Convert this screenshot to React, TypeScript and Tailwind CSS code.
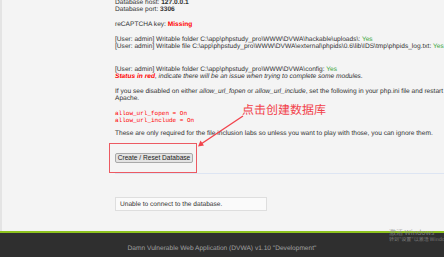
import React from 'react';

const Yes = () => <span className="text-[#3aa63a]">Yes</span>;

export default function App() {
  return (
    <div className="relative flex h-[257px] w-[444px] flex-col overflow-hidden bg-[#f4f4f4] font-['Liberation_Sans',Arial,sans-serif] text-[6.6px] text-[#333] [text-rendering:geometricPrecision]">
      <div className="flex flex-1 border-l-2 border-[#e4e4e4]">
        <div className="flex flex-1 flex-col pl-[113px] pr-[5px] leading-[7.4px]">
          {/* Database info */}
          <div className="mt-[-1px]">
            <p>Database host: <b>127.0.0.1</b></p>
            <p>Database port: <b>3306</b></p>
          </div>
          <p className="mt-[7.4px]">
            reCAPTCHA key: <b className="text-[#f00]">Missing</b>
          </p>
          <div className="mt-[7.4px] whitespace-nowrap">
            <p>[User: admin] Writable folder C:\app\phpstudy_pro\WWW\DVWA\hackable\uploads\: <Yes /></p>
            <p>[User: admin] Writable file C:\app\phpstudy_pro\WWW\DVWA\external\phpids\0.6\lib\IDS\tmp\phpids_log.txt: <Yes /></p>
          </div>
          <div className="mt-[15.2px] whitespace-nowrap">
            <p>[User: admin] Writable folder C:\app\phpstudy_pro\WWW\DVWA\config: <Yes /></p>
            <p className="italic">
              <b className="text-[#f00]">Status in red</b>, indicate there will be an issue when trying to complete some modules.
            </p>
          </div>
          <div className="mt-[7px]">
            <p className="whitespace-nowrap">
              If you see disabled on either <i>allow_url_fopen</i> or <i>allow_url_include</i>, set the following in your php.ini file and restart
            </p>
            <p>Apache.</p>
          </div>
          <div className="mt-[7px] font-['Liberation_Mono',monospace] text-[6px] leading-[7.7px] text-[#f00]">
            <p>allow_url_fopen = On</p>
            <p>allow_url_include = On</p>
          </div>
          <p className="mt-[5px] whitespace-nowrap">
            These are only required for the file inclusion labs so unless you want to play with those, you can ignore them.
          </p>

          {/* Form */}
          <div className="mt-[16px]">
            <button className="flex h-[10px] w-[78px] items-center justify-center whitespace-nowrap rounded-[2px] border border-[#a9a9a9] bg-[#e3e3e3] text-[6.6px] leading-none text-[#222]">
              Create / Reset Database
            </button>
          </div>
          <div className="mt-[10px] border-t border-[#dde5f3]" />

          <div className="mt-[23px] flex h-[14px] w-[152px] items-center border border-[#dedede] bg-[#fafafa] pl-[4px]">
            Unable to connect to the database.
          </div>
        </div>
      </div>

      {/* Footer */}
      <div className="h-[26px] border-t-2 border-[#8dc21f] bg-[#2f2f2f] pt-[12px] text-center leading-[7px] text-[#a0a0a0]">
        Damn Vulnerable Web Application (DVWA) v1.10 "Development"
      </div>

      {/* Annotation overlay */}
      <div className="absolute left-[109px] top-[143px] h-[30px] w-[88px] border-[1.5px] border-[#ec5a62]" />
      <div className="absolute left-[242px] top-[103px] font-['Noto_Sans_CJK_SC',sans-serif] text-[12px] leading-[14px] text-[#f2434c]">
        点击创建数据库
      </div>
      <svg className="absolute left-0 top-0" width="444" height="257">
        <line x1="243" y1="116" x2="201" y2="144" stroke="#f2434c" strokeWidth="1.3" />
        <path d="M198 146.5 L200.5 140.5 L204 145.5 Z" fill="#f2434c" />
      </svg>

      {/* Windows watermark */}
      <div className="absolute left-[389px] top-[229px] whitespace-nowrap font-['Noto_Sans_CJK_SC',sans-serif] text-[#8a8a8a] opacity-80">
        <p className="text-[7px] leading-[8px]">激活 Windows</p>
        <p className="text-[5px] leading-[6px]">转到"设置"以激活 Windows。</p>
      </div>
    </div>
  );
}
